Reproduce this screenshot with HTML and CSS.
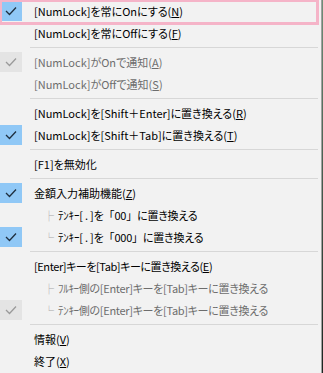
FILE: index.html
```html
<!DOCTYPE html>
<html lang="ja">
<head>
<meta charset="utf-8">
<link rel="stylesheet" href="styles.css">
</head>
<body>
<div class="menu">
  <div class="item checked"><span class="chk"><svg viewBox="0 0 12 10" width="12" height="10"><polyline points="1,5 4.5,8.5 11,1.5"/></svg></span><span class="label">[NumLock]を常にOnにする(<u>N</u>)</span></div>
  <div class="item"><span class="chk"></span><span class="label">[NumLock]を常にOffにする(<u>F</u>)</span></div>
  <div class="sep"></div>
  <div class="item disabled checked"><span class="chk"><svg viewBox="0 0 12 10" width="12" height="10"><polyline points="1,5 4.5,8.5 11,1.5"/></svg></span><span class="label">[NumLock]がOnで通知(<u>A</u>)</span></div>
  <div class="item disabled"><span class="chk"></span><span class="label">[NumLock]がOffで通知(<u>S</u>)</span></div>
  <div class="sep"></div>
  <div class="item"><span class="chk"></span><span class="label">[NumLock]を[Shift＋Enter]に置き換える(<u>R</u>)</span></div>
  <div class="item checked"><span class="chk"><svg viewBox="0 0 12 10" width="12" height="10"><polyline points="1,5 4.5,8.5 11,1.5"/></svg></span><span class="label">[NumLock]を[Shift＋Tab]に置き換える(<u>T</u>)</span></div>
  <div class="sep"></div>
  <div class="item"><span class="chk"></span><span class="label">[F1]を無効化</span></div>
  <div class="sep"></div>
  <div class="item checked"><span class="chk"><svg viewBox="0 0 12 10" width="12" height="10"><polyline points="1,5 4.5,8.5 11,1.5"/></svg></span><span class="label">金額入力補助機能(<u>Z</u>)</span></div>
  <div class="item sub"><span class="chk"></span><span class="tree">├</span><span class="label tight">ﾃﾝｷｰ[ . ]を<span class="br">「00」</span>に置き換える</span></div>
  <div class="item sub checked"><span class="chk"><svg viewBox="0 0 12 10" width="12" height="10"><polyline points="1,5 4.5,8.5 11,1.5"/></svg></span><span class="tree">└</span><span class="label tight">ﾃﾝｷｰ[ . ]を<span class="br">「000」</span>に置き換える</span></div>
  <div class="sep"></div>
  <div class="item"><span class="chk"></span><span class="label kana">[Enter]キーを[Tab]キーに置き換える(<u>E</u>)</span></div>
  <div class="item sub disabled"><span class="chk"></span><span class="tree">├</span><span class="label kana2">ﾌﾙｷｰ側の[Enter]キーを[Tab]キーに置き換える</span></div>
  <div class="item sub disabled checked"><span class="chk"><svg viewBox="0 0 12 10" width="12" height="10"><polyline points="1,5 4.5,8.5 11,1.5"/></svg></span><span class="tree">└</span><span class="label kana2">ﾃﾝｷｰ側の[Enter]キーを[Tab]キーに置き換える</span></div>
  <div class="sep"></div>
  <div class="item"><span class="chk"></span><span class="label">情報(<u>V</u>)</span></div>
  <div class="item"><span class="chk"></span><span class="label">終了(<u>X</u>)</span></div>
  <div class="mark"></div>
</div>
</body>
</html>
```

FILE: styles.css
```css
html {
  background: linear-gradient(#6f8f78, #1c2420);
  height: 100%;
}
body {
  margin: 0;
  font-family: "Noto Sans CJK JP", "Noto Sans", sans-serif;
  font-size: 11px;
  font-feature-settings: "palt";
  color: #000;
}
.menu {
  position: relative;
  width: 321px;
  height: 373px;
  background: #f2f2f2;
  border-right: 1px solid #a0a0a0;
  overflow: hidden;
}
.item {
  display: flex;
  align-items: center;
  height: 22px;
  white-space: nowrap;
}
.chk {
  flex: none;
  width: 22px;
  height: 20px;
  margin-right: 12px;
  display: flex;
  align-items: center;
  justify-content: center;
}
.checked .chk {
  background: #90c8f6;
}
.chk svg polyline {
  fill: none;
  stroke: #1f2f3f;
  stroke-width: 1.3;
}
.disabled {
  color: #6d6d6d;
}
.disabled.checked .chk {
  background: #e4e4e4;
}
.disabled .chk svg polyline {
  stroke: #9a9a9a;
}
.tree {
  color: #a8a8a8;
  font-size: 10px;
  margin-left: 10px;
  margin-right: 4px;
}
.br {
  font-feature-settings: normal;
}
.tight {
  letter-spacing: -0.2px;
}
.kana {
  letter-spacing: -0.42px;
}
.kana2 {
  letter-spacing: -0.3px;
}
.label u {
  text-underline-offset: 1px;
}
.sep {
  height: 7px;
  display: flex;
  align-items: center;
  padding-left: 30px;
  padding-right: 3px;
}
.sep::before {
  content: "";
  flex: 1;
  height: 1px;
  background: #d7d7d7;
}
.mark {
  position: absolute;
  left: -1px;
  top: -1px;
  width: 314px;
  height: 20px;
  border: 3px solid #f5b4c8;
}
```
